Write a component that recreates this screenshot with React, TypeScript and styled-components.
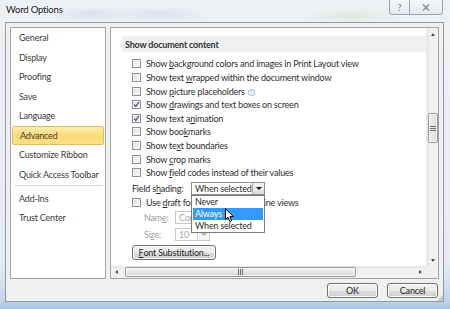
import styled, { createGlobalStyle } from 'styled-components';

const FONT = `Lato, 'Open Sans', 'Noto Sans', sans-serif`;

const GlobalStyle = createGlobalStyle`
  html, body { margin: 0; padding: 0; background: #fff; }
  body { font-family: ${FONT}; font-size: 9px; letter-spacing: -0.2px; color: #2e2e2e; }
  * { box-sizing: border-box; }
`;

const Window = styled.div`
  position: relative;
  width: 450px;
  height: 309px;
  display: flex;
  flex-direction: column;
  padding: 0 6px 7px 5px;
  white-space: nowrap;
  background:
    radial-gradient(ellipse 40px 8px at 90px 14px, rgba(120, 150, 200, 0.18), transparent),
    radial-gradient(ellipse 50px 8px at 160px 14px, rgba(120, 150, 200, 0.18), transparent),
    radial-gradient(ellipse 50px 8px at 350px 16px, rgba(140, 180, 120, 0.15), transparent),
    linear-gradient(to bottom, #eef1f4 0%, #e6ebf1 85%, #c4d6eb 97%, #a9c4e4 100%);
`;

const TitleBar = styled.div`
  height: 22px;
  display: flex;
  align-items: flex-start;
`;

const Title = styled.div`
  padding: 4px 0 0 1px;
  font-size: 9.5px;
  color: #111;
  text-shadow: 0 0 4px #fff, 0 0 2px #fff;
`;

const Caption = styled.div`
  margin-left: auto;
  margin-right: 1px;
  display: flex;
`;

const CaptionButton = styled.div<{ $w: number }>`
  width: ${p => p.$w}px;
  height: 15px;
  border: 1px solid #9aa6b5;
  border-top: none;
  margin-left: -1px;
  display: flex;
  align-items: center;
  justify-content: center;
  background: linear-gradient(#f4f6f8, #e4e9ee);
  color: #6a7787;
  font-size: 9px;
  &:first-child { border-bottom-left-radius: 3px; }
  &:last-child { border-bottom-right-radius: 3px; }
`;

const Client = styled.div`
  flex: 1;
  display: flex;
  flex-direction: column;
  background: #f0f0f0;
  border: 1px solid #8e9aa8;
  padding: 4px 4px 3px 4px;
  position: relative;
`;

const Body = styled.div`
  height: 252px;
  display: flex;
  gap: 4px;
`;

const Nav = styled.div`
  width: 96px;
  background: #fff;
  border: 1px solid #a3a3a3;
  display: flex;
  flex-direction: column;
`;

const NavItem = styled.div<{ $active?: boolean }>`
  height: 19.5px;
  display: flex;
  align-items: center;
  padding-left: ${p => (p.$active ? '7px' : '8px')};
  margin: 0 ${p => (p.$active ? '1px' : '0')};
  color: #3a3a3a;
  border-radius: 2px;
  border: ${p => (p.$active ? '1px solid #e3bd5a' : 'none')};
  background: ${p => (p.$active ? 'linear-gradient(#fdedb0, #fbd973 55%, #fbe08c)' : 'transparent')};
`;

const NavSep = styled.div`
  height: 1px;
  margin: 1px 2px 2.5px 3px;
  background: #d7d7d7;
`;

const Main = styled.div`
  flex: 1;
  background: #fff;
  border: 1px solid #a3a3a3;
  display: grid;
  grid-template-columns: 1fr 12px;
  grid-template-rows: 1fr 12px;
`;

const Content = styled.div`
  padding: 8px 0 0 10px;
  overflow: hidden;
`;

const SectionHeader = styled.div`
  height: 16px;
  background: #eef0f2;
  display: flex;
  align-items: center;
  padding-left: 4px;
  font-weight: 700;
  color: #333;
`;

const Rows = styled.div`
  padding-top: 5.2px;
`;

const Row = styled.div<{ $indent?: number; $h?: number; $mt?: number; $gap?: number }>`
  height: ${p => p.$h ?? 13.6}px;
  margin-top: ${p => p.$mt ?? 0}px;
  display: flex;
  align-items: center;
  gap: ${p => p.$gap ?? 5}px;
  padding-left: ${p => p.$indent ?? 11}px;
`;

const Box = styled.div`
  width: 9px;
  height: 9px;
  border: 1px solid #8e8f8f;
  background: linear-gradient(135deg, #d9dadb, #f7f7f7 80%);
  box-shadow: inset 0 0 0 1px #f4f4f4;
  display: flex;
  align-items: center;
  justify-content: center;
  flex: none;
`;

const Label = styled.span<{ $disabled?: boolean; $w?: number }>`
  color: ${p => (p.$disabled ? '#9c9c9c' : '#2e2e2e')};
  width: ${p => (p.$w ? `${p.$w}px` : 'auto')};
  flex: none;
`;

const InfoIcon = styled.span`
  display: inline-flex;
  width: 7px;
  height: 7px;
  margin-left: 3px;
  border: 1px solid #8fa8cc;
  border-radius: 50%;
  font-size: 5px;
  line-height: 1;
  color: #6f8fbf;
  align-items: center;
  justify-content: center;
  vertical-align: middle;
`;

const SelectWrap = styled.div`
  position: relative;
`;

const Select = styled.div<{ $w: number; $disabled?: boolean }>`
  width: ${p => p.$w}px;
  height: 13px;
  border: 1px solid ${p => (p.$disabled ? '#c9c9c9' : '#8d8d8d')};
  background: #fff;
  display: flex;
  align-items: center;
  padding-left: 3px;
  color: ${p => (p.$disabled ? '#a8a8a8' : '#2e2e2e')};
`;

const SelectText = styled.span`
  flex: 1;
  overflow: hidden;
`;

const SelectArrow = styled.div<{ $disabled?: boolean }>`
  width: 12px;
  height: 11px;
  flex: none;
  border-left: 1px solid ${p => (p.$disabled ? '#d4d4d4' : '#a9a9a9')};
  background: ${p => (p.$disabled ? '#f4f4f4' : 'linear-gradient(#f4f4f4, #dcdcdc)')};
  display: flex;
  align-items: center;
  justify-content: center;
  &::after {
    content: '';
    border-left: 3px solid transparent;
    border-right: 3px solid transparent;
    border-top: 3px solid ${p => (p.$disabled ? '#b4b4b4' : '#111')};
  }
`;

const DropList = styled.div`
  position: absolute;
  left: 0;
  top: 13px;
  width: 74px;
  background: #fff;
  border: 1px solid #7a7a7a;
  padding: 0 1px;
  z-index: 2;
`;

const DropItem = styled.div<{ $selected?: boolean }>`
  height: 12px;
  display: flex;
  align-items: center;
  padding-left: 2px;
  background: ${p => (p.$selected ? '#3399ff' : 'transparent')};
  color: ${p => (p.$selected ? '#fff' : '#2e2e2e')};
`;

const Cursor = styled.svg`
  position: absolute;
  left: 33px;
  top: 12px;
  z-index: 3;
`;

const PushButton = styled.div<{ $w: number }>`
  width: ${p => p.$w}px;
  height: 15px;
  border: 1px solid #707070;
  border-radius: 3px;
  background: linear-gradient(#f2f2f2 0%, #ebebeb 50%, #dddddd 51%, #cfcfcf 100%);
  box-shadow: inset 0 0 0 1px #fcfcfc;
  display: flex;
  align-items: center;
  justify-content: center;
  color: #1e1e1e;
`;

const VScroll = styled.div`
  background: linear-gradient(to right, #e3e3e3, #f1f1f1 30%, #f1f1f1);
  border-left: 1px solid #ececec;
  display: flex;
  flex-direction: column;
`;

const HScroll = styled.div`
  background: linear-gradient(#e3e3e3, #f1f1f1 30%, #f1f1f1);
  display: flex;
  align-items: center;
`;

const Corner = styled.div`
  background: #f0f0f0;
`;

const ArrowCell = styled.div<{ $dir: 'up' | 'down' | 'left' | 'right' }>`
  width: 11px;
  height: 12px;
  flex: none;
  display: flex;
  align-items: center;
  justify-content: center;
  &::after {
    content: '';
    ${p =>
      p.$dir === 'up'
        ? 'border-left: 2.5px solid transparent; border-right: 2.5px solid transparent; border-bottom: 3px solid #4d4d4d;'
        : p.$dir === 'down'
        ? 'border-left: 2.5px solid transparent; border-right: 2.5px solid transparent; border-top: 3px solid #4d4d4d;'
        : p.$dir === 'left'
        ? 'border-top: 2.5px solid transparent; border-bottom: 2.5px solid transparent; border-right: 3px solid #4d4d4d;'
        : 'border-top: 2.5px solid transparent; border-bottom: 2.5px solid transparent; border-left: 3px solid #4d4d4d;'}
  }
`;

const Track = styled.div<{ $vertical?: boolean }>`
  flex: 1;
  display: flex;
  flex-direction: ${p => (p.$vertical ? 'column' : 'row')};
  align-items: center;
`;

const Thumb = styled.div<{ $vertical?: boolean; $len: number; $offset: number }>`
  ${p =>
    p.$vertical
      ? `width: 10px; height: ${p.$len}px; margin-top: ${p.$offset}px;`
      : `height: 10px; width: ${p.$len}px; margin-left: ${p.$offset}px;`}
  flex: none;
  border: 1px solid #979797;
  border-radius: 2px;
  background: ${p =>
    p.$vertical
      ? 'linear-gradient(to right, #f4f4f4, #e6e6e6 50%, #d6d6d6)'
      : 'linear-gradient(#f4f4f4, #e6e6e6 50%, #d6d6d6)'};
  box-shadow: inset 0 0 0 1px #fafafa;
  display: flex;
  align-items: center;
  justify-content: center;
`;

const Grip = styled.div<{ $vertical?: boolean }>`
  width: ${p => (p.$vertical ? 6 : 5)}px;
  height: ${p => (p.$vertical ? 5 : 6)}px;
  background: ${p =>
    p.$vertical
      ? 'repeating-linear-gradient(#6e6e6e 0 1px, transparent 1px 2px)'
      : 'repeating-linear-gradient(to right, #6e6e6e 0 1px, transparent 1px 2px)'};
`;

const Footer = styled.div`
  margin-top: 4px;
  display: flex;
  justify-content: flex-end;
  gap: 9px;
  padding-right: 1px;
`;

const ResizeGrip = styled.div`
  position: absolute;
  right: 0;
  bottom: 0;
  width: 6px;
  height: 6px;
  background: radial-gradient(circle, #b5b5b5 0.6px, transparent 0.9px) 0 0 / 2px 2px;
  clip-path: polygon(100% 0, 100% 100%, 0 100%);
`;

const u = (s: string) => <u>{s}</u>;

const CheckMark = () => (
  <svg width="7" height="7" viewBox="0 0 7 7">
    <path d="M1.2 3.6 L2.8 5.4 L5.9 1" fill="none" stroke="#3a4f8f" strokeWidth="1.3" />
  </svg>
);

interface CheckRowProps {
  checked?: boolean;
  children: React.ReactNode;
}

const CheckRow = ({ checked, children }: CheckRowProps) => (
  <Row>
    <Box>{checked && <CheckMark />}</Box>
    <Label>{children}</Label>
  </Row>
);

const NAV = ['General', 'Display', 'Proofing', 'Save', 'Language', 'Advanced', 'Customize Ribbon', 'Quick Access Toolbar'];

export default function App() {
  return (
    <>
      <GlobalStyle />
      <Window>
        <TitleBar>
          <Title>Word Options</Title>
          <Caption>
            <CaptionButton $w={21}>?</CaptionButton>
            <CaptionButton $w={34}>
              <svg width="8" height="7" viewBox="0 0 8 7">
                <path d="M1 0.5 L7 6.5 M7 0.5 L1 6.5" stroke="#7d8896" strokeWidth="1.2" fill="none" />
              </svg>
            </CaptionButton>
          </Caption>
        </TitleBar>
        <Client>
          <Body>
            <Nav>
              {NAV.map(item => (
                <NavItem key={item} $active={item === 'Advanced'}>
                  {item}
                </NavItem>
              ))}
              <NavSep />
              <NavItem>Add-Ins</NavItem>
              <NavItem>Trust Center</NavItem>
            </Nav>
            <Main>
              <Content>
                <SectionHeader>Show document content</SectionHeader>
                <Rows>
                  <CheckRow>Show {u('b')}ackground colors and images in Print Layout view</CheckRow>
                  <CheckRow>Show text {u('w')}rapped within the document window</CheckRow>
                  <CheckRow>
                    Show {u('p')}icture placeholders<InfoIcon>i</InfoIcon>
                  </CheckRow>
                  <CheckRow checked>Show {u('d')}rawings and text boxes on screen</CheckRow>
                  <CheckRow checked>Show text a{u('n')}imation</CheckRow>
                  <CheckRow>Show boo{u('k')}marks</CheckRow>
                  <CheckRow>Show te{u('x')}t boundaries</CheckRow>
                  <CheckRow>Show {u('c')}rop marks</CheckRow>
                  <CheckRow>Show {u('f')}ield codes instead of their values</CheckRow>
                </Rows>
                <Row $h={15} $mt={1.4} $gap={0}>
                  <Label $w={59}>Field s{u('h')}ading:</Label>
                  <SelectWrap>
                    <Select $w={74}>
                      <SelectText>When selected</SelectText>
                      <SelectArrow />
                    </Select>
                    <DropList>
                      <DropItem>Never</DropItem>
                      <DropItem $selected>Always</DropItem>
                      <DropItem>When selected</DropItem>
                      <Cursor width="10" height="15" viewBox="0 0 10 15">
                        <path d="M0.5 0.5 L0.5 11.5 L3 9.2 L4.8 13.5 L6.6 12.7 L4.9 8.6 L8.3 8.6 Z" fill="#fff" stroke="#000" strokeWidth="1" strokeLinejoin="round" />
                      </Cursor>
                    </DropList>
                  </SelectWrap>
                </Row>
                <CheckRow>Use {u('d')}raft font in Draft and Outline views</CheckRow>
                <Row $indent={23} $h={14} $mt={1} $gap={0}>
                  <Label $disabled $w={31}>Nam{u('e')}:</Label>
                  <Select $w={80} $disabled>
                    <SelectText>Courier New</SelectText>
                    <SelectArrow $disabled />
                  </Select>
                </Row>
                <Row $indent={23} $h={14} $mt={3} $gap={0}>
                  <Label $disabled $w={31}>Si{u('z')}e:</Label>
                  <Select $w={35} $disabled>
                    <SelectText>10</SelectText>
                    <SelectArrow $disabled />
                  </Select>
                </Row>
                <Row $h={15} $mt={3}>
                  <PushButton $w={84}>{u('F')}ont Substitution...</PushButton>
                </Row>
              </Content>
              <VScroll>
                <ArrowCell $dir="up" />
                <Track $vertical>
                  <Thumb $vertical $len={30} $offset={73}>
                    <Grip $vertical />
                  </Thumb>
                </Track>
                <ArrowCell $dir="down" />
              </VScroll>
              <HScroll>
                <ArrowCell $dir="left" />
                <Track>
                  <Thumb $len={231} $offset={3}>
                    <Grip />
                  </Thumb>
                </Track>
                <ArrowCell $dir="right" />
              </HScroll>
              <Corner />
            </Main>
          </Body>
          <Footer>
            <PushButton $w={51}>OK</PushButton>
            <PushButton $w={51}>Cancel</PushButton>
          </Footer>
          <ResizeGrip />
        </Client>
      </Window>
    </>
  );
}
